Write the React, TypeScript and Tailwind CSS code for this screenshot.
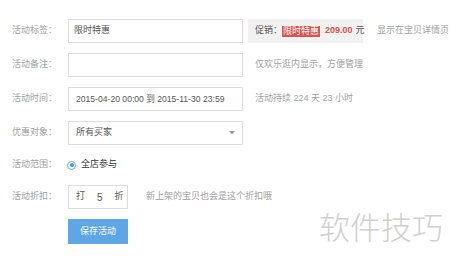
import React from "react";

const font = { fontFamily: '"Liberation Sans", Arial, "Noto Sans CJK SC", sans-serif' };

function Row({ label, children, h = "h-[24px]" }: { label: string; children: React.ReactNode; h?: string }) {
  return (
    <div className={`flex items-center whitespace-nowrap ${h}`}>
      <div className="w-[56px] shrink-0 text-[9px] text-[#a0a0a0]">{label}</div>
      {children}
    </div>
  );
}

export default function App() {
  return (
    <div className="w-[450px] h-[261px] bg-white relative overflow-hidden" style={font}>
      <div className="flex flex-col pl-[12px] pt-[19px]">
        <Row label="活动标签：">
          <div className="w-[175px] shrink-0 h-[24px] border border-[#dcdcdc] flex items-center pl-[5px] text-[9px] text-[#555]">限时特惠</div>
          <div className="ml-[5px] w-[115px] shrink-0 h-[24px] bg-[#f1f1f1] flex items-center pl-[7px] text-[9px] whitespace-nowrap">
            <span className="text-[#555]">促销：</span>
            <span className="bg-[#d9534f] text-white px-[1px] leading-[11px]">限时特惠</span>
            <span className="ml-[5px] text-[#d9534f] font-bold">209.00</span>
            <span className="ml-[3px] text-[#555]">元</span>
          </div>
          <div className="ml-[14px] text-[9px] text-[#a0a0a0]">显示在宝贝详情页</div>
        </Row>
        <div className="h-[10px]" />
        <Row label="活动备注：">
          <div className="w-[175px] shrink-0 h-[24px] border border-[#dcdcdc]" />
          <div className="ml-[12px] text-[9px] text-[#a0a0a0]">仅欢乐逛内显示，方便管理</div>
        </Row>
        <div className="h-[10px]" />
        <Row label="活动时间：">
          <div className="w-[175px] shrink-0 h-[24px] border border-[#dcdcdc] flex items-center pl-[7px] text-[8.6px] text-[#555] whitespace-nowrap">2015-04-20 00:00 到 2015-11-30 23:59</div>
          <div className="ml-[12px] text-[9px] text-[#a0a0a0]">活动持续 224 天 23 小时</div>
        </Row>
        <div className="h-[10px]" />
        <Row label="优惠对象：">
          <div className="w-[175px] shrink-0 h-[24px] border border-[#dcdcdc] flex items-center justify-between pl-[7px] pr-[7px] text-[9px] text-[#555]">
            <span>所有买家</span>
            <svg width="6" height="4" viewBox="0 0 6 4"><path d="M0 0H6L3 3.5Z" fill="#999" /></svg>
          </div>
        </Row>
        <div className="h-[10px]" />
        <Row label="活动范围：" h="h-[20px]">
          <div className="flex items-center">
            <div className="w-[9px] h-[9px] rounded-full border border-[#6aa8e6] flex items-center justify-center ml-[-1px]">
              <div className="w-[4px] h-[4px] rounded-full bg-[#3d8fe0]" />
            </div>
            <span className="ml-[5px] text-[9px] text-[#333]">全店参与</span>
          </div>
        </Row>
        <div className="h-[10px]" />
        <Row label="活动折扣：">
          <div className="w-[60px] shrink-0 h-[24px] border border-[#dcdcdc] flex items-center text-[9px] text-[#555]">
            <span className="ml-[7px]">打</span>
            <span className="ml-[12px] text-[10px]">5</span>
            <span className="ml-[12px]">折</span>
          </div>
          <div className="ml-[18px] text-[9px] text-[#a0a0a0]">新上架的宝贝也会是这个折扣哦</div>
        </Row>
        <div className="h-[10px]" />
        <div className="flex pl-[56px]">
          <div className="w-[60px] h-[25px] bg-[#5ea6e6] text-white text-[9px] flex items-center justify-center">保存活动</div>
        </div>
      </div>
      <div
        className="absolute left-[319px] top-[203px] text-[31px] text-[#d0d0d0]"
        style={{ fontFamily: '"Noto Sans CJK SC", sans-serif', fontWeight: 300 }}
      >
        软件技巧
      </div>
    </div>
  );
}
